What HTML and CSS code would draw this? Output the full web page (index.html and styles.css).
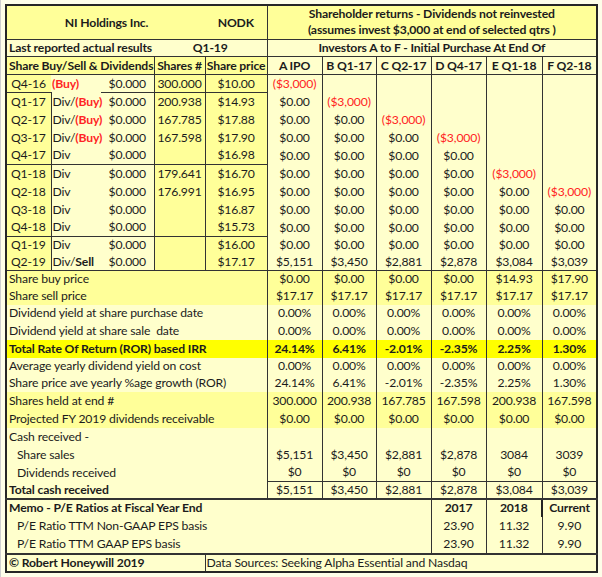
FILE: index.html
```html
<!DOCTYPE html>
<html>
<head>
<meta charset="utf-8">
<title>NI Holdings Inc. - Shareholder returns</title>
<link rel="stylesheet" href="styles.css">
</head>
<body>
<table class="sheet">
<colgroup>
<col class="c-q"><col class="c-lab"><col class="c-amt"><col class="c-sh"><col class="c-pr">
<col class="c-a"><col class="c-b"><col class="c-c"><col class="c-d"><col class="c-e"><col class="c-f">
</colgroup>
<tr class="h32">
  <td colspan="4" class="y b ctr bb">NI Holdings Inc.</td>
  <td class="y b ctr bb">NODK</td>
  <td colspan="6" class="y b ctr bb bl two">Shareholder returns - Dividends not reinvested<br>(assumes invest $3,000 at end of selected qtrs )</td>
</tr>
<tr class="h17">
  <td colspan="3" class="c b bb">Last reported actual results</td>
  <td colspan="2" class="c b ctr bb">Q1-19</td>
  <td colspan="6" class="c b ctr bb bl">Investors A to F - Initial Purchase At End Of</td>
</tr>
<tr class="h18">
  <td colspan="3" class="y b bb">Share Buy/Sell &amp; Dividends</td>
  <td class="y b ctr bb bl">Shares #</td>
  <td class="y b ctr bb bl">Share price</td>
  <td class="c b ctr bb bl">A IPO</td>
  <td class="c b ctr bb bl">B Q1-17</td>
  <td class="c b ctr bb bl">C Q2-17</td>
  <td class="c b ctr bb bl">D Q4-17</td>
  <td class="c b ctr bb bl">E Q1-18</td>
  <td class="c b ctr bb bl">F Q2-18</td>
</tr>
<tr class="h18">
  <td class="q bb">Q4-16</td><td class="lab nob"><span class="red b">(Buy)</span></td><td class="amt bb">$0.000</td>
  <td class="sh bb">300.000</td><td class="pr bb">$10.00</td>
  <td class="v red">($3,000)</td><td class="v"></td><td class="v"></td><td class="v"></td><td class="v"></td><td class="v"></td>
</tr>
<tr class="h18">
  <td class="q">Q1-17</td><td class="lab">Div/<span class="red b">(Buy)</span></td><td class="amt">$0.000</td>
  <td class="sh">200.938</td><td class="pr">$14.93</td>
  <td class="v">$0.00</td><td class="v red">($3,000)</td><td class="v"></td><td class="v"></td><td class="v"></td><td class="v"></td>
</tr>
<tr class="h18">
  <td class="q">Q2-17</td><td class="lab">Div/<span class="red b">(Buy)</span></td><td class="amt">$0.000</td>
  <td class="sh">167.785</td><td class="pr">$17.88</td>
  <td class="v">$0.00</td><td class="v">$0.00</td><td class="v red">($3,000)</td><td class="v"></td><td class="v"></td><td class="v"></td>
</tr>
<tr class="h18">
  <td class="q">Q3-17</td><td class="lab">Div/<span class="red b">(Buy)</span></td><td class="amt">$0.000</td>
  <td class="sh">167.598</td><td class="pr">$17.90</td>
  <td class="v">$0.00</td><td class="v">$0.00</td><td class="v">$0.00</td><td class="v red">($3,000)</td><td class="v"></td><td class="v"></td>
</tr>
<tr class="h18">
  <td class="q bb">Q4-17</td><td class="lab bb">Div</td><td class="amt bb">$0.000</td>
  <td class="sh bb"></td><td class="pr bb">$16.98</td>
  <td class="v">$0.00</td><td class="v">$0.00</td><td class="v">$0.00</td><td class="v">$0.00</td><td class="v"></td><td class="v"></td>
</tr>
<tr class="h18">
  <td class="q">Q1-18</td><td class="lab">Div</td><td class="amt">$0.000</td>
  <td class="sh">179.641</td><td class="pr">$16.70</td>
  <td class="v">$0.00</td><td class="v">$0.00</td><td class="v">$0.00</td><td class="v">$0.00</td><td class="v red">($3,000)</td><td class="v"></td>
</tr>
<tr class="h18">
  <td class="q">Q2-18</td><td class="lab">Div</td><td class="amt">$0.000</td>
  <td class="sh">176.991</td><td class="pr">$16.95</td>
  <td class="v">$0.00</td><td class="v">$0.00</td><td class="v">$0.00</td><td class="v">$0.00</td><td class="v">$0.00</td><td class="v red">($3,000)</td>
</tr>
<tr class="h18">
  <td class="q">Q3-18</td><td class="lab">Div</td><td class="amt">$0.000</td>
  <td class="sh"></td><td class="pr">$16.87</td>
  <td class="v">$0.00</td><td class="v">$0.00</td><td class="v">$0.00</td><td class="v">$0.00</td><td class="v">$0.00</td><td class="v">$0.00</td>
</tr>
<tr class="h18">
  <td class="q bb">Q4-18</td><td class="lab bb">Div</td><td class="amt bb">$0.000</td>
  <td class="sh bb"></td><td class="pr bb">$15.73</td>
  <td class="v">$0.00</td><td class="v">$0.00</td><td class="v">$0.00</td><td class="v">$0.00</td><td class="v">$0.00</td><td class="v">$0.00</td>
</tr>
<tr class="h17">
  <td class="q">Q1-19</td><td class="lab">Div</td><td class="amt">$0.000</td>
  <td class="sh"></td><td class="pr">$16.00</td>
  <td class="v">$0.00</td><td class="v">$0.00</td><td class="v">$0.00</td><td class="v">$0.00</td><td class="v">$0.00</td><td class="v">$0.00</td>
</tr>
<tr class="h17 rule">
  <td class="q">Q2-19</td><td class="lab">Div/<span class="b">Sell</span></td><td class="amt">$0.000</td>
  <td class="sh"></td><td class="pr">$17.17</td>
  <td class="v">$5,151</td><td class="v">$3,450</td><td class="v">$2,881</td><td class="v">$2,878</td><td class="v">$3,084</td><td class="v">$3,039</td>
</tr>
<tr class="h17 ry">
  <td colspan="5" class="lbl">Share buy price</td>
  <td class="v">$0.00</td><td class="v">$0.00</td><td class="v">$0.00</td><td class="v">$0.00</td><td class="v">$14.93</td><td class="v">$17.90</td>
</tr>
<tr class="h17 ry">
  <td colspan="5" class="lbl">Share sell price</td>
  <td class="v">$17.17</td><td class="v">$17.17</td><td class="v">$17.17</td><td class="v">$17.17</td><td class="v">$17.17</td><td class="v">$17.17</td>
</tr>
<tr class="h17 rc">
  <td colspan="5" class="lbl">Dividend yield at share purchase date</td>
  <td class="v">0.00%</td><td class="v">0.00%</td><td class="v">0.00%</td><td class="v">0.00%</td><td class="v">0.00%</td><td class="v">0.00%</td>
</tr>
<tr class="h18 rc">
  <td colspan="5" class="lbl">Dividend yield at share sale&nbsp; date</td>
  <td class="v">0.00%</td><td class="v">0.00%</td><td class="v">0.00%</td><td class="v">0.00%</td><td class="v">0.00%</td><td class="v">0.00%</td>
</tr>
<tr class="h18 rh b">
  <td colspan="5" class="lbl">Total Rate Of Return (ROR) based IRR</td>
  <td class="v">24.14%</td><td class="v">6.41%</td><td class="v">-2.01%</td><td class="v">-2.35%</td><td class="v">2.25%</td><td class="v">1.30%</td>
</tr>
<tr class="h17 rc">
  <td colspan="5" class="lbl">Average yearly dividend yield on cost</td>
  <td class="v">0.00%</td><td class="v">0.00%</td><td class="v">0.00%</td><td class="v">0.00%</td><td class="v">0.00%</td><td class="v">0.00%</td>
</tr>
<tr class="h17 rc">
  <td colspan="5" class="lbl">Share price ave yearly %age growth (ROR)</td>
  <td class="v">24.14%</td><td class="v">6.41%</td><td class="v">-2.01%</td><td class="v">-2.35%</td><td class="v">2.25%</td><td class="v">1.30%</td>
</tr>
<tr class="h18 ry">
  <td colspan="5" class="lbl">Shares held at end #</td>
  <td class="v">300.000</td><td class="v">200.938</td><td class="v">167.785</td><td class="v">167.598</td><td class="v">200.938</td><td class="v">167.598</td>
</tr>
<tr class="h18 ry">
  <td colspan="5" class="lbl">Projected FY 2019 dividends receivable</td>
  <td class="v">$0.00</td><td class="v">$0.00</td><td class="v">$0.00</td><td class="v">$0.00</td><td class="v">$0.00</td><td class="v">$0.00</td>
</tr>
<tr class="h18 rc">
  <td colspan="5" class="lbl">Cash received -</td>
  <td class="v"></td><td class="v"></td><td class="v"></td><td class="v"></td><td class="v"></td><td class="v"></td>
</tr>
<tr class="h18 rc">
  <td colspan="5" class="lbl ind">Share sales</td>
  <td class="v">$5,151</td><td class="v">$3,450</td><td class="v">$2,881</td><td class="v">$2,878</td><td class="v">3084</td><td class="v">3039</td>
</tr>
<tr class="h18 rc">
  <td colspan="5" class="lbl ind">Dividends received</td>
  <td class="v bb">$0</td><td class="v bb">$0</td><td class="v bb">$0</td><td class="v bb">$0</td><td class="v bb">$0</td><td class="v bb">$0</td>
</tr>
<tr class="h17 rc rule2">
  <td colspan="5" class="lbl b">Total cash received</td>
  <td class="v">$5,151</td><td class="v">$3,450</td><td class="v">$2,881</td><td class="v">$2,878</td><td class="v">$3,084</td><td class="v">$3,039</td>
</tr>
<tr class="h18 rc">
  <td colspan="8" class="lbl b">Memo - P/E Ratios at Fiscal Year End</td>
  <td class="v b">2017</td><td class="v b">2018</td><td class="v b thick">Current</td>
</tr>
<tr class="h18 rc">
  <td colspan="8" class="lbl ind">P/E Ratio TTM Non-GAAP EPS basis</td>
  <td class="v">23.90</td><td class="v">11.32</td><td class="v">9.90</td>
</tr>
<tr class="h19 rc rule2">
  <td colspan="8" class="lbl ind">P/E Ratio TTM GAAP EPS basis</td>
  <td class="v">23.90</td><td class="v">11.32</td><td class="v">9.90</td>
</tr>
<tr class="h18 rc">
  <td colspan="4" class="lbl b">© Robert Honeywill 2019</td>
  <td colspan="7" class="lbl src">Data Sources: Seeking Alpha Essential and Nasdaq</td>
</tr>
</table>
</body>
</html>
```

FILE: styles.css
```css
html, body {
  margin: 0;
  padding: 0;
}
body {
  background: #fefee9;
  border-left: 1px solid #cfcfcf;
  padding: 4px 0 0 4px;
  min-height: 577px;
  box-sizing: border-box;
}
.sheet {
  border-collapse: collapse;
  table-layout: fixed;
  width: 591px;
  border: 2px solid #262626;
  font-family: Lato, "Liberation Sans", sans-serif;
  font-size: 12.2px;
  letter-spacing: -0.15px;
  color: #1c1c1c;
}
.c-q { width: 45px; }
.c-lab { width: 50px; }
.c-amt { width: 53px; }
.c-sh { width: 51px; }
.c-pr { width: 62px; }
.c-a { width: 55px; }
.c-b { width: 54px; }
.c-c { width: 55px; }
.c-d { width: 55px; }
.c-e { width: 56px; }
.c-f { width: 55px; }

.sheet td {
  padding: 0 1px;
  white-space: nowrap;
  line-height: 14px;
  vertical-align: middle;
}
.h32 { height: 32px; }
.h17 { height: 17px; }
.h18 { height: 18px; }
.h19 { height: 19px; }

.y { background: #ffff99; }
.c { background: #ffffcc; }
.b { font-weight: bold; }
.ctr { text-align: center; }
.red { color: #ff2424; }
.bb { border-bottom: 1px solid #333; }
.bl { border-left: 1px solid #333; }
.sheet td.two { line-height: 16px; padding-top: 0; padding-bottom: 1px; }
.sheet td:first-child { padding-left: 2px; }

.q { background: #ffff99; text-align: center; }
.sheet td.q { padding-left: 0; }
.lab { background: #ffffcc; border-left: 1px solid #333; }
.lab.nob { border-left: none; }
.amt { background: #ffffcc; text-align: center; }
.sh { background: #ffff99; text-align: center; border-left: 1px solid #333; }
.pr { background: #ffff99; text-align: center; border-left: 1px solid #333; border-right: 1px solid #333; }
.v { background: #ffffcc; text-align: center; border-left: 1px solid #333; }
.v.red { color: #ff2424; }

.rule td { border-bottom: 1px solid #333; }
.rule2 td { border-bottom: 2px solid #333; }

.ry td { background: #ffff99; }
.rc td { background: #ffffcc; }
.rh td { background: #ffff00; }

.lbl { text-align: left; border-right: 1px solid #333; }
.sheet td.ind { padding-left: 10px; }
.sheet td.src { padding-left: 1px; border-right: none; }
.thick { border-left: 2px solid #222; }
```
